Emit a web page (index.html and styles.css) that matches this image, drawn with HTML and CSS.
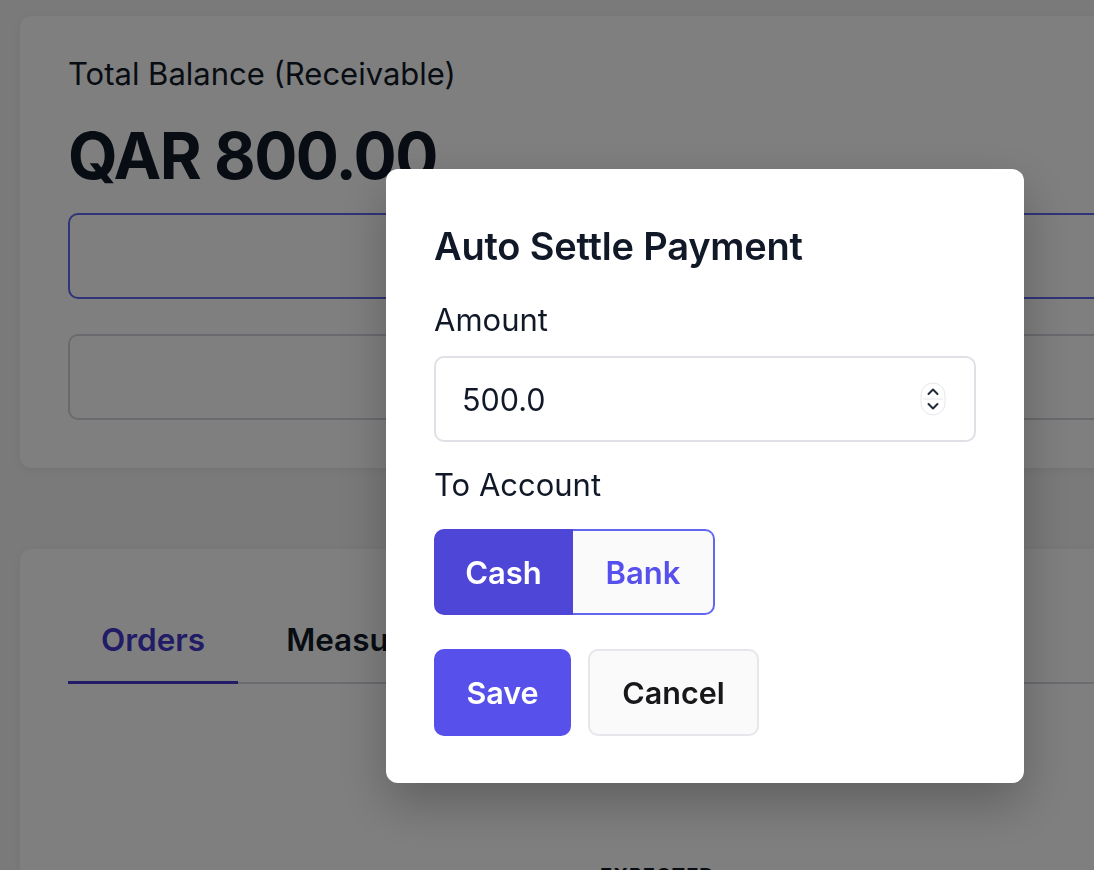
FILE: index.html
```html
<!DOCTYPE html>
<html lang="en">
<head>
  <meta charset="UTF-8" />
  <meta name="viewport" content="width=device-width, initial-scale=1.0"/>
  <title>Customer Balance</title>
  <link rel="stylesheet" href="styles.css">
</head>
<body>
  <div class="page">
    <section class="card balance">
      <div class="balance-label">Total Balance (Receivable)</div>
      <div class="balance-amount">QAR 800.00</div>
      <div class="action-box primary"></div>
      <div class="action-box"></div>
    </section>

    <section class="card details">
      <nav class="tabs">
        <a href="#" class="tab active">Orders</a>
        <a href="#" class="tab">Measurements</a>
        <a href="#" class="tab">Payments</a>
      </nav>
      <div class="table-head">EXPECTED</div>
    </section>
  </div>

  <div class="overlay">
    <div class="modal">
      <h2>Auto Settle Payment</h2>

      <label class="field-label">Amount</label>
      <div class="amount-input">
        <span>500.0</span>
        <svg class="spinner" width="26" height="34" viewBox="0 0 26 34">
          <rect x="1" y="1" width="24" height="32" rx="12" fill="#fff" stroke="#e5e7eb"/>
          <line x1="3" y1="17" x2="23" y2="17" stroke="#e5e7eb"/>
          <path d="M8.5 12 L13 7.5 L17.5 12" fill="none" stroke="#1f2937" stroke-width="2" stroke-linecap="round" stroke-linejoin="round"/>
          <path d="M8.5 22 L13 26.5 L17.5 22" fill="none" stroke="#1f2937" stroke-width="2" stroke-linecap="round" stroke-linejoin="round"/>
        </svg>
      </div>

      <label class="field-label">To Account</label>
      <div class="segmented">
        <button class="seg on">Cash</button>
        <button class="seg">Bank</button>
      </div>

      <div class="actions">
        <button class="btn save">Save</button>
        <button class="btn cancel">Cancel</button>
      </div>
    </div>
  </div>
</body>
</html>
```

FILE: styles.css
```css
:root {
  --primary: #5750ea;
  --primary-dark: #4e46d6;
  --accent: #6366f1;
  --bg: #f4f4f5;
  --text: #111827;
  --border: #d1d5db;
}

* {
  margin: 0;
  padding: 0;
  box-sizing: border-box;
  font-family: Inter, "Noto Sans", sans-serif;
}

body {
  background: var(--bg);
  color: var(--text);
  overflow: hidden;
  height: 870px;
}

.page {
  width: 1240px;
  padding: 16px 0 0 20px;
}

.card {
  background: #fff;
  border-radius: 12px;
  box-shadow: 0 2px 8px rgba(0, 0, 0, 0.06);
}

.balance {
  padding: 38px 48px 48px;
}

.balance-label {
  font-size: 31px;
  line-height: 40px;
}

.balance-amount {
  font-size: 64px;
  line-height: 64px;
  font-weight: 700;
  margin-top: 30px;
  letter-spacing: -1.5px;
}

.action-box {
  height: 86px;
  border: 2px solid var(--border);
  border-radius: 10px;
  margin-top: 35px;
}

.action-box.primary {
  border-color: var(--accent);
  margin-top: 25px;
}

.details {
  margin-top: 81px;
  padding: 48px;
  height: 400px;
}

.tabs {
  display: flex;
  border-bottom: 2px solid #d6d6e0;
}

.tab {
  padding: 23px 33px 21px;
  font-size: 31.5px;
  line-height: 40px;
  font-weight: 600;
  color: var(--text);
  text-decoration: none;
  border-bottom: 3px solid transparent;
  margin-bottom: -2px;
}

.tab + .tab {
  padding-left: 48px;
}

.tab.active {
  color: #4338ca;
  border-color: #4338ca;
}

.table-head {
  margin-top: 180px;
  padding-left: 532px;
  font-size: 20px;
  font-weight: 700;
  letter-spacing: 1px;
}

.overlay {
  position: fixed;
  inset: 0;
  background: rgba(0, 0, 0, 0.5);
}

.modal {
  width: 638px;
  margin: 169px 0 0 386px;
  background: #fff;
  border-radius: 12px;
  padding: 54px 48px 47px;
  box-shadow: 0 20px 50px rgba(0, 0, 0, 0.25);
  display: flex;
  flex-direction: column;
  align-items: flex-start;
}

.modal h2 {
  font-size: 38px;
  line-height: 46px;
  font-weight: 600;
  letter-spacing: -0.2px;
  color: #111827;
}

.field-label {
  font-size: 31px;
  line-height: 40px;
  margin-top: 31px;
  color: #111827;
}

.amount-input {
  align-self: stretch;
  height: 86px;
  margin-top: 16px;
  border: 2px solid #e0e0e6;
  border-radius: 10px;
  padding: 0 28px 0 26px;
  display: flex;
  align-items: center;
  justify-content: space-between;
  font-size: 30.5px;
  color: #111827;
}

.amount-input + .field-label {
  margin-top: 23px;
}

.segmented {
  display: flex;
  margin-top: 24px;
  height: 86px;
}

.seg {
  font-size: 31px;
  font-weight: 600;
  cursor: pointer;
  background: #fafafa;
  color: #5850ec;
  border: 2px solid var(--accent);
  border-left: none;
  border-radius: 0 10px 10px 0;
  width: 142px;
}

.seg.on {
  background: var(--primary-dark);
  color: #fff;
  border: none;
  border-radius: 10px 0 0 10px;
  width: 139px;
}

.actions {
  display: flex;
  gap: 17px;
  margin-top: 34px;
}

.btn {
  height: 87px;
  border-radius: 10px;
  font-size: 30.5px;
  font-weight: 600;
  cursor: pointer;
}

.btn.save {
  width: 137px;
  background: var(--primary);
  color: #fff;
  border: none;
}

.btn.cancel {
  width: 171px;
  background: #fafafa;
  color: #18181b;
  border: 2px solid #e5e7eb;
}
```
